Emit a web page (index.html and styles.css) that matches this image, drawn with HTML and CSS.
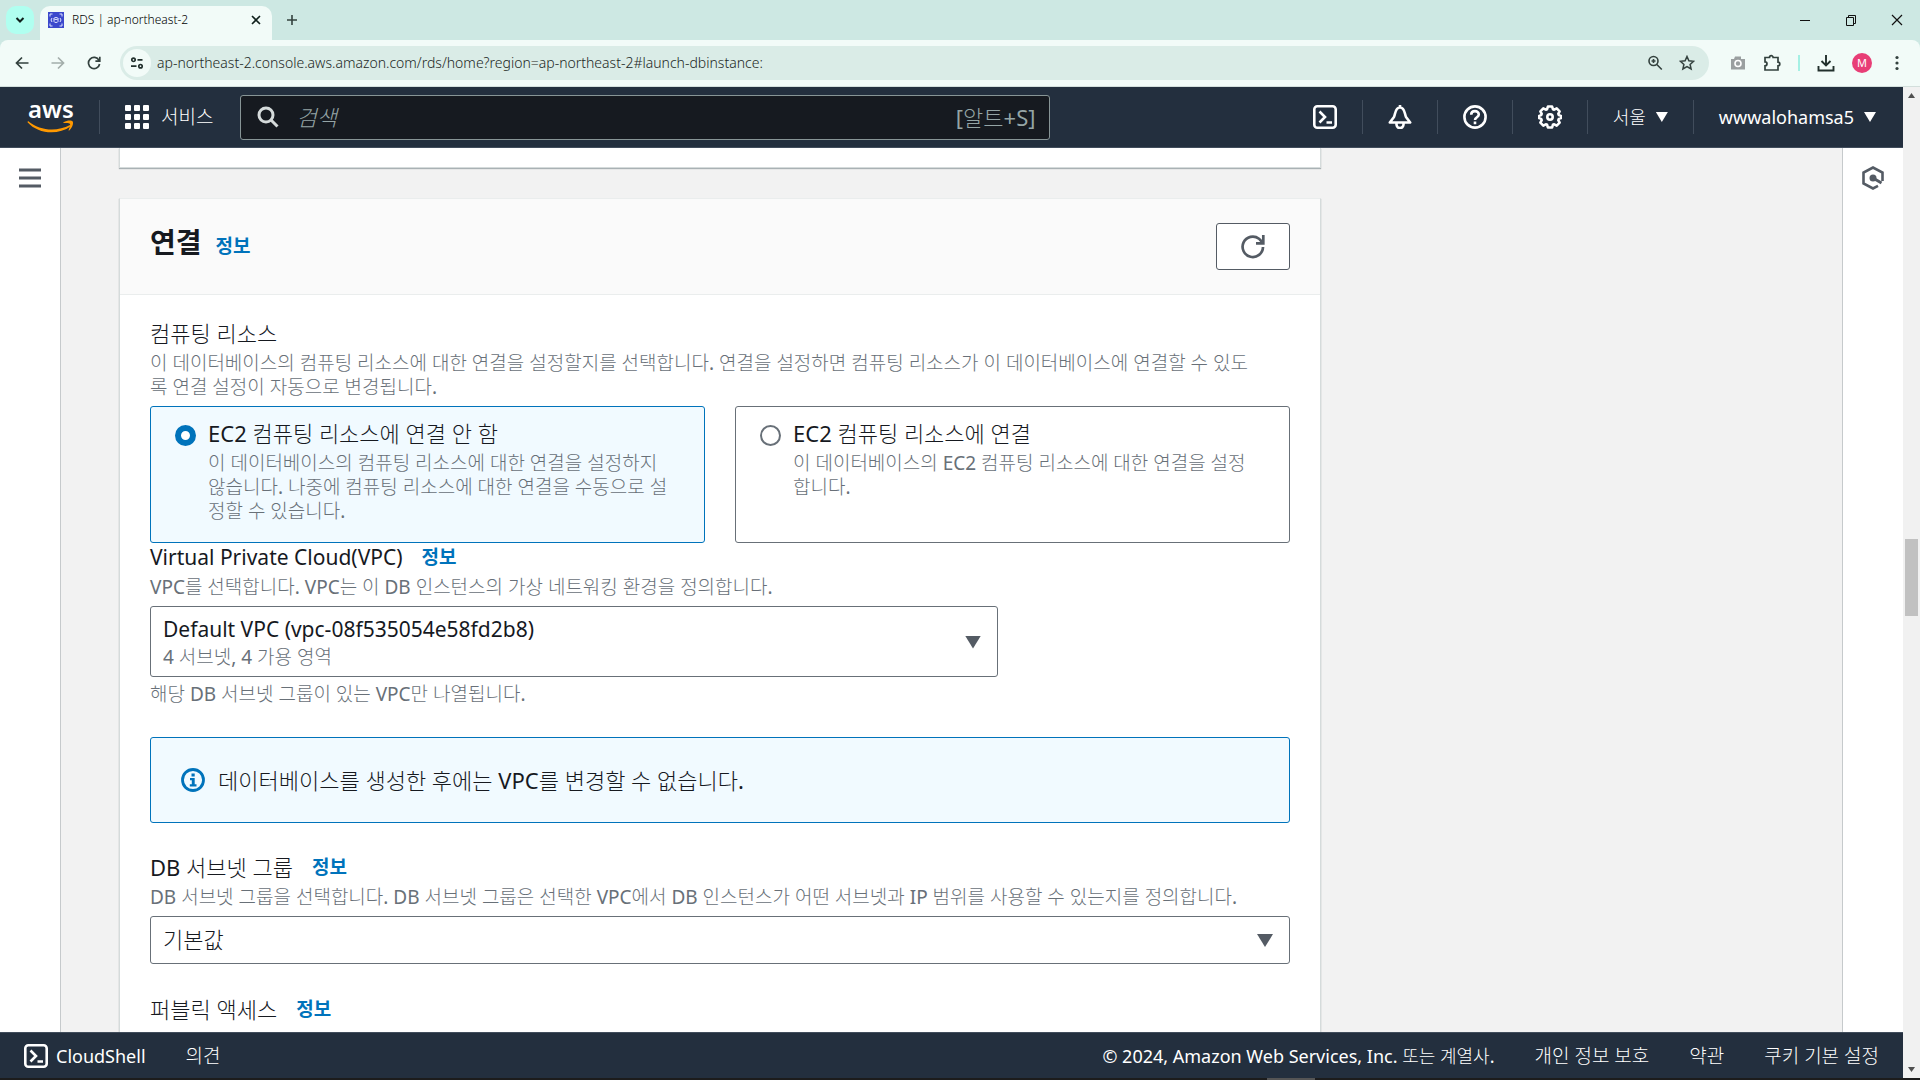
FILE: index.html
```html
<!DOCTYPE html>
<html lang="ko">
<head>
  <meta charset="UTF-8">
  <meta name="viewport" content="width=device-width, initial-scale=1.0">
  <title>RDS | ap-northeast-2</title>
  <link rel="stylesheet" href="styles.css">
</head>
<body>
  <!-- browser tabs -->
  <div class="tab-strip">
    <button class="tab-search" aria-label="탭 검색">
      <svg width="10" height="10" viewBox="0 0 10 10"><path d="M1.5 3l3.500 3.500L8.500 3" fill="none" stroke="#10201c" stroke-width="2"/></svg>
    </button>
    <div class="tab">
      <svg width="16" height="16" viewBox="0 0 16 16"><rect width="16" height="16" fill="#3b48cc"/><g fill="none" stroke="#dfe3ff"><path d="M2 4.500V2h2.500M14 4.500V2h-2.500M2 11.500V14h2.500M14 11.500V14h-2.500M4 6L3 8l1 2M12 6l1 2-1 2"/><ellipse cx="8" cy="6.500" rx="2" ry="1"/><path d="M6 6.500v3c0 1.300 4 1.300 4 0v-3"/></g></svg>
      <span class="tab-title">RDS | ap-northeast-2</span>
      <button class="tab-close" aria-label="탭 닫기">
        <svg width="10" height="10" viewBox="0 0 10 10"><path d="M1 1l8 8M9 1L1 9" stroke="#10201c" stroke-width="1.600"/></svg>
      </button>
    </div>
    <button class="new-tab" aria-label="새 탭">
      <svg width="12" height="12" viewBox="0 0 12 12"><path d="M6 1v10M1 6h10" stroke="#33413e" stroke-width="1.600"/></svg>
    </button>
    <div class="window-buttons">
      <button aria-label="최소화"><svg width="12" height="12" viewBox="0 0 12 12"><path d="M1 6.500h10" stroke="#111"/></svg></button>
      <button aria-label="이전 크기로"><svg width="12" height="12" viewBox="0 0 12 12"><path d="M1.500 3.500h7v8h-7zM3.500 3.500v-2h7v8h-2" fill="none" stroke="#111"/></svg></button>
      <button aria-label="닫기"><svg width="12" height="12" viewBox="0 0 12 12"><path d="M1 1l10 10M11 1L1 11" stroke="#111" stroke-width="1.200"/></svg></button>
    </div>
  </div>

  <!-- address bar -->
  <div class="toolbar">
    <div class="nav-buttons">
      <button aria-label="뒤로"><svg width="14" height="14" viewBox="0 0 14 14"><path d="M13.500 7H1.500M7 1.500L1.500 7 7 12.500" fill="none" stroke="#33413e" stroke-width="1.700"/></svg></button>
      <button aria-label="앞으로"><svg width="14" height="14" viewBox="0 0 14 14"><path d="M.5 7h12M7 1.500L12.500 7 7 12.500" fill="none" stroke="#a3aeab" stroke-width="1.700"/></svg></button>
      <button aria-label="새로고침"><svg width="14" height="14" viewBox="0 0 14 14"><path d="M12 4.300A5.600 5.600 0 1 0 12.600 8M12.800.8v4.400H8.400" fill="none" stroke="#33413e" stroke-width="1.700"/></svg></button>
    </div>
    <div class="address">
      <span class="site-info"><svg width="14" height="14" viewBox="0 0 14 14" fill="none" stroke="#22302d" stroke-width="1.700"><circle cx="3.500" cy="3.800" r="1.700"/><path d="M7.500 3.800h5M1 10.200h5.500"/><circle cx="10.500" cy="10.200" r="1.700"/></svg></span>
      <input class="url" type="text" aria-label="주소창" value="ap-northeast-2.console.aws.amazon.com/rds/home?region=ap-northeast-2#launch-dbinstance:">
      <button aria-label="확대"><svg width="16" height="16" viewBox="0 0 16 16" fill="none" stroke="#33413e" stroke-width="1.600"><circle cx="6.500" cy="6" r="4.500"/><path d="M9.800 9.500l5 5M6.500 4v4M4.500 6h4"/></svg></button>
      <button aria-label="북마크"><svg width="16" height="16" viewBox="0 0 16 16"><path d="M8 1.500l1.900 4.300 4.700.5-3.500 3.100 1 4.600L8 11.600 3.900 14l1-4.600L1.400 6.300l4.700-.5z" fill="none" stroke="#33413e" stroke-width="1.500"/></svg></button>
    </div>
    <div class="extensions">
      <button aria-label="캡처"><svg width="16" height="16" viewBox="0 0 16 16"><path d="M1 4h3l1-2.500h6V4h4v10.500H1z" fill="#9a9fa0"/><circle cx="8" cy="8.500" r="3" fill="none" stroke="#fff" stroke-width="1.600"/></svg></button>
      <button aria-label="확장 프로그램"><svg width="18" height="18" viewBox="0 0 18 18"><path d="M2 3.500h4.500a1.800 1.800 0 0 1 3.600 0H15v4.700a1.800 1.800 0 0 1 0 3.600V16H2v-4.200a2 2 0 0 0 0-4z" fill="none" stroke="#33413e" stroke-width="1.700"/></svg></button>
      <span class="bar"></span>
      <button aria-label="다운로드"><svg width="18" height="18" viewBox="0 0 18 18"><path d="M9 1v10.500M4.500 7L9 11.500 13.500 7M1.500 12v4.500h15V12" fill="none" stroke="#22302d" stroke-width="1.900"/></svg></button>
      <button class="avatar" aria-label="프로필">M</button>
      <button aria-label="메뉴"><svg width="16" height="16" viewBox="0 0 16 16" fill="#33413e"><circle cx="8" cy="2.500" r="1.600"/><circle cx="8" cy="8" r="1.600"/><circle cx="8" cy="13.500" r="1.600"/></svg></button>
    </div>
  </div>

  <div class="viewport">
    <div class="console">
      <header class="aws-header">
        <a class="logo" href="#" aria-label="AWS">
          <svg width="47" height="50" viewBox="0 0 47 50"><text x="1" y="26" class="logo-text">aws</text><path d="M1 29c12 10 29 11 42 4l.8 1.200C31 43.500 11 42 .5 30.200z" fill="#f90"/><path d="M36.500 30.300c4-2.300 8-2 9.200-.8 1 1.500-.2 6-3.400 8.900-.6.400-1 .1-.7-.5 1.200-2.800 1.900-5 1.400-6-.7-1-3.200-1-6-.8-.7 0-.9-.4-.5-.8z" fill="#f90"/></svg>
        </a>
        <button class="services">
          <svg width="24" height="24" viewBox="0 0 24 24" fill="#fff"><rect width="6" height="6" rx="1"/><rect x="9" width="6" height="6" rx="1"/><rect x="18" width="6" height="6" rx="1"/><rect y="9" width="6" height="6" rx="1"/><rect x="9" y="9" width="6" height="6" rx="1"/><rect x="18" y="9" width="6" height="6" rx="1"/><rect y="18" width="6" height="6" rx="1"/><rect x="9" y="18" width="6" height="6" rx="1"/><rect x="18" y="18" width="6" height="6" rx="1"/></svg>
          서비스
        </button>
        <label class="search">
          <svg width="22" height="22" viewBox="0 0 22 22" fill="none" stroke="#d5dbdb" stroke-width="3"><circle cx="9" cy="9" r="7"/><path d="M14 14l6.500 6.500"/></svg>
          <input type="text" placeholder="검색" aria-label="검색">
          <span>[알트+S]</span>
        </label>
        <nav class="header-tools">
          <button aria-label="CloudShell"><svg width="24" height="24" viewBox="0 0 24 24" fill="none" stroke="#fff" stroke-width="2.600"><rect x="1.300" y="1.300" width="21.400" height="21.400" rx="3"/><path d="M6.500 6.500l5.500 5.500-5.500 5.500M13.500 17.500h5.500"/></svg></button>
          <button aria-label="알림"><svg width="24" height="24" viewBox="0 0 24 24" fill="none" stroke="#fff" stroke-width="2.600" stroke-linejoin="round"><path d="M1.800 17.500L6 12C7.500 9 7 2.500 12 2.500S16.500 9 18 12l4.200 5.500zM12 2.500V0M8.500 18v1.500a3.500 3.500 0 0 0 7 0V18"/></svg></button>
          <button aria-label="도움말"><svg width="24" height="24" viewBox="0 0 24 24" fill="none" stroke="#fff" stroke-width="2.600"><circle cx="12" cy="12" r="10.600"/><path d="M8.200 9.800c0-5 7.600-4.700 7.600-.3 0 2.700-3.800 2.700-3.800 5.500M12 16.600v2.600"/></svg></button>
          <button aria-label="설정"><svg width="24" height="24" viewBox="0 0 24 24" fill="none" stroke="#fff" stroke-width="2.600" stroke-linejoin="round"><path d="M9.900 1.500h4.200l.8 2.700 1.300.5 2.500-1.300 2.900 2.900-1.300 2.500.5 1.300 2.200.8v2.200l-2.200.8-.5 1.300 1.300 2.500-2.900 2.900-2.500-1.300-1.300.5-.8 2.700H9.900l-.8-2.700-1.300-.5-2.500 1.300-2.900-2.900 1.300-2.500-.5-1.300-2-.8v-2.200l2-.8.5-1.300-1.300-2.500 2.900-2.900 2.500 1.300 1.300-.5z"/><circle cx="12" cy="12" r="2.700"/></svg></button>
          <button>서울 <i class="caret"></i></button>
          <button>wwwalohamsa5 <i class="caret"></i></button>
        </nav>
      </header>

      <div class="workspace">
        <aside class="rail rail-left">
          <button aria-label="메뉴 열기"><svg width="22" height="20" viewBox="0 0 22 20"><path d="M0 2h22M0 10h22M0 18h22" stroke="#545b64" stroke-width="3"/></svg></button>
        </aside>

        <main class="content">
          <section class="card card-previous"></section>

          <section class="card">
            <div class="card-header">
              <div class="card-title">
                <h2>연결</h2>
                <a class="info" href="#">정보</a>
              </div>
              <button class="refresh" aria-label="새로고침"><svg width="24" height="24" viewBox="0 0 24 24"><path d="M22 12a10.200 10.200 0 1 1-4-8.300L22 8M22.300 0v8.300H15" fill="none" stroke="#545b64" stroke-width="2.700"/></svg></button>
            </div>

            <div class="card-body">
              <div class="field" role="radiogroup" aria-labelledby="compute">
                <div class="label-row"><span id="compute">컴퓨팅 리소스</span></div>
                <p class="hint">이 데이터베이스의 컴퓨팅 리소스에 대한 연결을 설정할지를 선택합니다. 연결을 설정하면 컴퓨팅 리소스가 이 데이터베이스에 연결할 수 있도<br>록 연결 설정이 자동으로 변경됩니다.</p>
                <div class="tiles">
                  <label class="tile selected">
                    <input type="radio" name="compute" checked>
                    <span>
                      <span class="tile-title">EC2 컴퓨팅 리소스에 연결 안 함</span>
                      <span class="hint">이 데이터베이스의 컴퓨팅 리소스에 대한 연결을 설정하지<br>않습니다. 나중에 컴퓨팅 리소스에 대한 연결을 수동으로 설<br>정할 수 있습니다.</span>
                    </span>
                  </label>
                  <label class="tile">
                    <input type="radio" name="compute">
                    <span>
                      <span class="tile-title">EC2 컴퓨팅 리소스에 연결</span>
                      <span class="hint">이 데이터베이스의 EC2 컴퓨팅 리소스에 대한 연결을 설정<br>합니다.</span>
                    </span>
                  </label>
                </div>
              </div>

              <div class="field field-vpc">
                <div class="label-row"><label for="vpc">Virtual Private Cloud(VPC)</label><a class="info" href="#">정보</a></div>
                <p class="hint">VPC를 선택합니다. VPC는 이 DB 인스턴스의 가상 네트워킹 환경을 정의합니다.</p>
                <div class="select select-vpc">
                  <select id="vpc"><option>Default VPC (vpc-08f535054e58fd2b8)</option></select>
                  <span class="select-meta">4 서브넷, 4 가용 영역</span>
                  <i class="caret"></i>
                </div>
                <p class="hint constraint">해당 DB 서브넷 그룹이 있는 VPC만 나열됩니다.</p>
              </div>

              <div class="alert">
                <svg width="24" height="24" viewBox="0 0 24 24"><circle cx="12" cy="12" r="10.500" fill="none" stroke="#0073bb" stroke-width="2.800"/><path d="M10.500 5.500h3.200v3h-3.200zM9 10h4.700v6.200H15.500v2.300H8.800v-2.300h2v-4H9z" fill="#0073bb"/></svg>
                데이터베이스를 생성한 후에는 VPC를 변경할 수 없습니다.
              </div>

              <div class="field">
                <div class="label-row"><label for="subnet">DB 서브넷 그룹</label><a class="info" href="#">정보</a></div>
                <p class="hint">DB 서브넷 그룹을 선택합니다. DB 서브넷 그룹은 선택한 VPC에서 DB 인스턴스가 어떤 서브넷과 IP 범위를 사용할 수 있는지를 정의합니다.</p>
                <div class="select">
                  <select id="subnet"><option>기본값</option></select>
                  <i class="caret"></i>
                </div>
              </div>

              <div class="field public-access">
                <div class="label-row"><span>퍼블릭 액세스</span><a class="info" href="#">정보</a></div>
              </div>
            </div>
          </section>
        </main>

        <aside class="rail rail-right">
          <button aria-label="도움말 패널"><svg width="22" height="24" viewBox="0 0 22 24"><path d="M20.500 15V6.500L11 1.500l-9.500 5v11l9.500 5 5-2.600" fill="none" stroke="#545b64" stroke-width="2.600"/><circle cx="11" cy="12" r="3.500" fill="#545b64"/><path d="M11 12l8.500 5" stroke="#545b64" stroke-width="3"/></svg></button>
        </aside>
      </div>

      <footer class="aws-footer">
        <button class="cloudshell"><svg width="24" height="24" viewBox="0 0 24 24" fill="none" stroke="#fff" stroke-width="2.600"><rect x="1.300" y="1.300" width="21.400" height="21.400" rx="3"/><path d="M6.500 6.500l5.500 5.500-5.500 5.500M13.500 17.500h5.500"/></svg>CloudShell</button>
        <a href="#">의견</a>
        <span class="copyright">© 2024, Amazon Web Services, Inc. 또는 계열사.</span>
        <a href="#">개인 정보 보호</a>
        <a href="#">약관</a>
        <a href="#">쿠키 기본 설정</a>
      </footer>
    </div>

    <div class="scrollbar"><i class="arrow-up"></i><span class="thumb"></span><i class="arrow-down"></i></div>
  </div>
  <div class="taskbar-edge"><span></span></div>
</body>
</html>
```
FILE: styles.css
```css
* {
  box-sizing: border-box;
}

body {
  margin: 0;
  height: 100vh;
  overflow: hidden;
  display: flex;
  flex-direction: column;
  background: #cde8e3;
  font-family: "Noto Sans", "Noto Sans CJK KR Light", "Noto Sans CJK KR", sans-serif;
  font-size: 22px;
  line-height: 28px;
  color: #16191f;
}

button, input, select {
  font: inherit;
  color: inherit;
  margin: 0;
  padding: 0;
  border: 0;
  background: none;
}

button {
  display: flex;
  align-items: center;
  justify-content: center;
}

svg {
  display: block;
  flex: none;
}

a {
  color: inherit;
  text-decoration: none;
}

p {
  margin: 0;
}

/* browser frame */
.tab-strip {
  flex: none;
  height: 40px;
  display: flex;
  align-items: center;
  padding-left: 6px;
  font-size: 12px;
  font-weight: 300;
}

.tab-search {
  width: 28px;
  height: 28px;
  border-radius: 10px;
  background: #b0fff0;
}

.tab {
  width: 232px;
  height: 34px;
  margin: 6px 0 0 6px;
  padding: 0 11px 6px 8px;
  display: flex;
  align-items: center;
  gap: 8px;
  border-radius: 10px 10px 0 0;
  background: #f2fbf8;
}

.tab-title {
  flex: 1;
  line-height: 16px;
  color: #000;
}

.new-tab {
  width: 40px;
  height: 28px;
}

.window-buttons {
  margin-left: auto;
  display: flex;
}

.window-buttons button {
  width: 46px;
  height: 40px;
}

.toolbar {
  flex: none;
  height: 47px;
  display: flex;
  align-items: center;
  border-radius: 8px 8px 0 0;
  background: #f2fbf8;
  border-bottom: 1px solid #d3dfdc;
}

.nav-buttons {
  width: 120px;
  padding-left: 4px;
  display: flex;
}

.nav-buttons button {
  width: 36px;
}

.address {
  flex: 1;
  height: 34px;
  padding: 0 14px 0 3px;
  display: flex;
  align-items: center;
  gap: 16px;
  border-radius: 17px;
  background: #daece7;
}

.site-info {
  width: 28px;
  height: 28px;
  display: flex;
  align-items: center;
  justify-content: center;
  border-radius: 50%;
  background: #f2fbf8;
}

.url {
  flex: 1;
  margin-left: -10px;
  font-size: 14px;
  font-weight: 300;
  line-height: 20px;
  color: #1c2825;
}

.extensions {
  display: flex;
  align-items: center;
  gap: 17px;
  padding: 0 15px 0 21px;
}

.bar {
  width: 2px;
  height: 16px;
  background: #a5f0e4;
}

.avatar {
  width: 20px;
  height: 20px;
  border-radius: 50%;
  background: #e83e76;
  color: #fff;
  font-size: 11px;
  line-height: 20px;
}

/* console shell */
.viewport {
  flex: 1;
  min-height: 0;
  display: flex;
}

.console {
  flex: 1;
  min-width: 0;
  display: flex;
  flex-direction: column;
}

.aws-header {
  flex: none;
  height: 61px;
  display: flex;
  align-items: center;
  background: #232f3e;
  border-bottom: 1px solid #414d5c;
  color: #fff;
  font-size: 18px;
}

.logo {
  display: flex;
  align-items: center;
  height: 34px;
  padding: 0 25px 0 27px;
  border-right: 1px solid #414d5c;
}

.logo-text {
  font-size: 24px;
  font-weight: 600;
  fill: #fff;
}

.services {
  gap: 12px;
  padding: 0 27px 0 25px;
  font-size: 19px;
}

.search {
  width: 810px;
  height: 45px;
  padding: 0 14px 0 16px;
  display: flex;
  align-items: center;
  gap: 17px;
  border: 1px solid #879596;
  border-radius: 3px;
  background: #161a20;
  color: #95a5a6;
  font-size: 22px;
}

.search input {
  flex: 1;
  min-width: 0;
}

.search input::placeholder {
  color: #95a5a6;
  font-style: italic;
  opacity: 1;
}

.header-tools {
  margin-left: auto;
  padding-right: 2px;
  display: flex;
}

.header-tools button {
  height: 34px;
  padding: 0 25px;
  gap: 10px;
  border-left: 1px solid #414d5c;
}

.header-tools button:first-child {
  border-left: 0;
}

.caret {
  width: 12px;
  height: 10px;
  background: currentColor;
  clip-path: polygon(0 0, 100% 0, 50% 100%);
}

.workspace {
  flex: 1;
  min-height: 0;
  display: flex;
  background: #f2f2f2;
}

.rail {
  flex: none;
  width: 61px;
  display: flex;
  justify-content: center;
  align-items: flex-start;
  padding-top: 18px;
  background: #fff;
}

.rail button {
  height: 24px;
}

.rail-left {
  border-right: 1px solid #c6cacc;
}

.rail-right {
  border-left: 1px solid #c6cacc;
}

.content {
  flex: 1;
  overflow: hidden;
  padding: 0 521px 0 58px;
}

.card {
  border: 1px solid #d5dbdb;
  border-top-color: #eaeded;
  box-shadow: 0 1px 1px rgba(0, 28, 36, 0.3);
  background: #fff;
}

.card-previous {
  height: 20px;
  margin-bottom: 30px;
  border-top: 0;
}

.card-header {
  display: flex;
  align-items: flex-start;
  justify-content: space-between;
  padding: 24px 30px;
  background: #fafafa;
  border-bottom: 1px solid #eaeded;
}

.card-title {
  display: flex;
  align-items: baseline;
  gap: 14px;
}

.card-title h2 {
  margin: 0;
  font-family: "Noto Sans", "Noto Sans CJK KR", sans-serif;
  font-size: 28px;
  line-height: 38px;
}

.info {
  font-family: "Noto Sans", "Noto Sans CJK KR", sans-serif;
  font-size: 19px;
  font-weight: 700;
  color: #0073bb;
}

.refresh {
  width: 74px;
  height: 47px;
  border: 1px solid #545b64;
  border-radius: 3px;
  background: #fff;
}

.card-body {
  padding: 24px 30px;
}

/* form fields */
.label-row {
  display: flex;
  gap: 19px;
  margin-bottom: 4px;
}

.field-vpc .label-row,
.select-vpc select {
  font-size: 21px;
}

.hint {
  font-size: 19px;
  line-height: 24px;
  color: #687078;
}

.tiles {
  display: grid;
  grid-template-columns: 1fr 1fr;
  gap: 30px;
  margin-top: 7px;
}

.tile {
  min-height: 137px;
  display: flex;
  align-items: flex-start;
  gap: 12px;
  padding: 12px 24px;
  border: 1px solid #687078;
  border-radius: 3px;
}

.tile.selected {
  border-color: #0073bb;
  background: #f1faff;
}

.tile input {
  appearance: none;
  flex: none;
  width: 21px;
  height: 21px;
  margin-top: 6px;
  border: 2px solid #687078;
  border-radius: 50%;
  background: #fff;
}

.tile input:checked {
  border: 6px solid #0073bb;
}

.tile-title,
.tile .hint {
  display: block;
}

.tile-title {
  margin-bottom: 4px;
}

.select {
  position: relative;
  display: grid;
  margin-top: 7px;
  border: 1px solid #687078;
  border-radius: 3px;
}

.select select {
  appearance: none;
  grid-area: 1 / 1;
  height: 46px;
  padding: 0 12px 2px;
}

.select .caret {
  position: absolute;
  right: 16px;
  top: 50%;
  margin-top: -6px;
  width: 16px;
  height: 13px;
  color: #545b64;
}

.select-vpc {
  width: 848px;
}

.select-vpc select {
  height: 69px;
  padding-bottom: 25px;
}

.select-meta {
  grid-area: 1 / 1;
  align-self: end;
  padding: 0 12px 7px;
  font-size: 19px;
  line-height: 24px;
  color: #687078;
  pointer-events: none;
}

.constraint {
  margin-top: 5px;
}

.alert {
  display: flex;
  align-items: center;
  gap: 13px;
  height: 86px;
  margin: 31px 0 30px;
  padding: 0 30px;
  border: 1px solid #0073bb;
  border-radius: 3px;
  background: #f1faff;
}

.public-access {
  margin-top: 31px;
}

/* footer */
.aws-footer {
  flex: none;
  height: 46px;
  display: flex;
  align-items: center;
  gap: 40px;
  padding: 0 24px;
  background: #232f3e;
  border-top: 1px solid #414d5c;
  color: #fff;
  font-size: 18px;
}

.aws-footer a {
  font-size: 19px;
}

.cloudshell {
  gap: 8px;
}

.copyright {
  margin-left: auto;
}

.scrollbar {
  flex: none;
  width: 17px;
  position: relative;
  background: #f1f1f1;
}

.thumb {
  position: absolute;
  top: 50%;
  left: 2px;
  right: 2px;
  height: 77px;
  margin-top: -44px;
  background: #c1c1c1;
}

.arrow-up,
.arrow-down {
  position: absolute;
  left: 5px;
  width: 7px;
  height: 5px;
  background: #505050;
}

.arrow-up {
  top: 6px;
  clip-path: polygon(50% 0, 100% 100%, 0 100%);
}

.arrow-down {
  bottom: 6px;
  clip-path: polygon(0 0, 100% 0, 50% 100%);
}

.taskbar-edge {
  flex: none;
  height: 2px;
  padding-left: 66%;
  background: #1c1c1c;
}

.taskbar-edge span {
  display: block;
  width: 48px;
  height: 2px;
  background: #555;
}
```
